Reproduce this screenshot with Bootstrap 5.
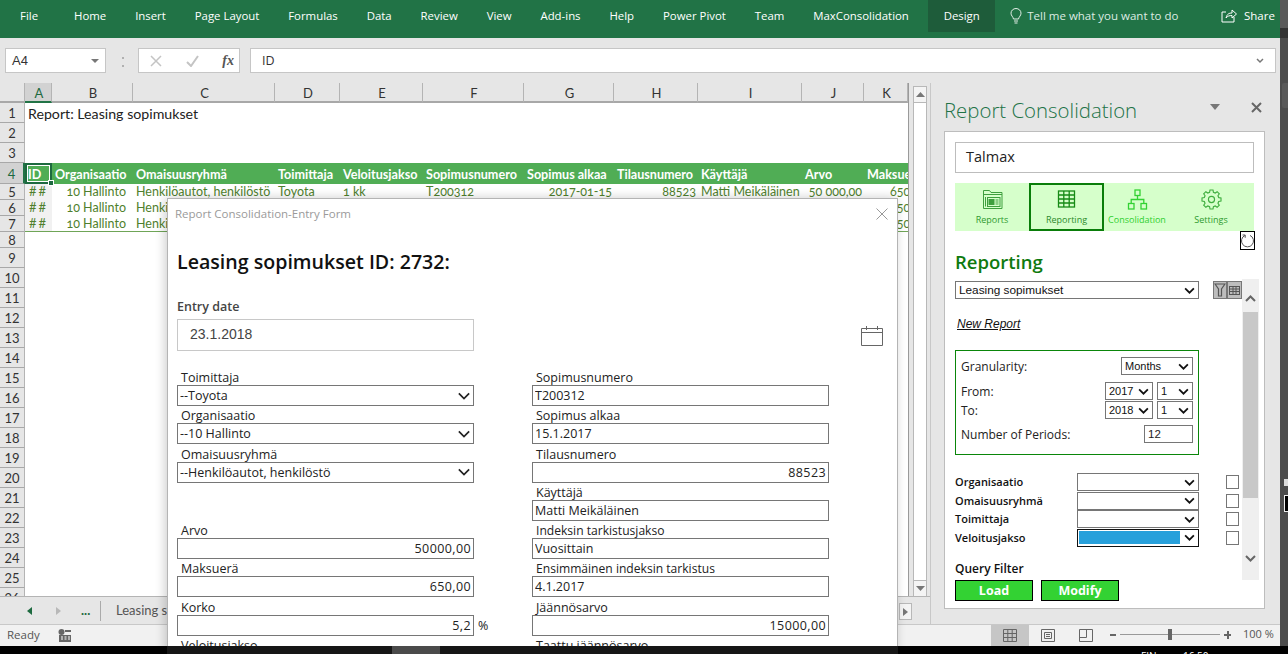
<!DOCTYPE html>
<html lang="en">
<head>
<meta charset="UTF-8" />
<title>Report Consolidation</title>
<link href="https://cdn.jsdelivr.net/npm/bootstrap@5.3.0/dist/css/bootstrap.min.css" rel="stylesheet">
<style>
  html, body { height: 654px; overflow: hidden; }
  body { font-family: "Open Sans", sans-serif; font-size: 12px; color: #222; background: #4c4c4c; position: relative; }
  .xl-page { width: 1288px; height: 646px; }
  .xl-window { width: 1280px; height: 646px; background: #e6e6e6; }
  .xl-strip { width: 8px; background: #4c4c4c; position: relative; }
  .xl-strip i { position: absolute; display: block; }
  .strip-a { left: 0; top: 0; width: 8px; height: 28px; background: #5a5a5a; }
  .strip-b { left: 0; top: 28px; width: 8px; height: 10px; background: #333; }
  .strip-c { left: 2px; top: 83px; width: 6px; height: 25px; background: #595959; border-radius: 2px 0 0 2px; }
  .strip-d { left: 4px; top: 479px; width: 4px; height: 7px; background: #ddd; }
  .strip-e { left: 4px; top: 495px; width: 4px; height: 17px; background: #000; border: 1px solid #eee; border-right: 0; }

  .xl-ribbon { height: 38px; background: #217346; color: #fff; font-size: 11.4px; padding-left: 20px; flex: none; }
  .xl-ribbon span { margin-right: 28.9px; line-height: 32px; white-space: nowrap; }
  .xl-ribbon .tab-file { margin-right: 36px; }
  .xl-ribbon .tab-design { background: #1e5c3a; height: 32px; width: 67px; text-align: center; margin: 0 15px 0 -9.500px; flex: none; }
  .xl-ribbon .tab-tell { color: #dcebe2; margin: 0 0 0 5px; font-size: 11.5px; }
  .xl-ribbon .tab-share { position: absolute; left: 1244px; margin: 0; font-size: 11.5px; }
  .xl-share-ico { left: 1221px; top: 9px; }

  .xl-formula { height: 45px; padding: 10px 4px 10px 5px; flex: none; }
  .xl-namebox { width: 101px; height: 25px; background: #fff; border: 1px solid #c6c6c6; padding: 1px 6px 0; font-family: "Liberation Sans", sans-serif; font-size: 13px; color: #333; }
  .xl-fx { width: 102px; height: 25px; margin: 0 10px 0 32px; padding: 0 5px 0 11px; background: #fff; border: 1px solid #c6c6c6; color: #bbb; }
  .xl-fx i { font-family: "Liberation Serif", serif; font-size: 14px; font-weight: 700; color: #555; }
  .xl-fxinput { height: 25px; background: #fff; border: 1px solid #c6c6c6; padding: 1px 11px 0; font-size: 12.5px; color: #333; }
  .xl-dots { position: absolute; left: 122px; top: 57px; width: 2px; height: 10px; border-top: 2px dotted #b0b0b0; border-bottom: 2px dotted #b0b0b0; }

  .xl-main { height: 541px; flex: none; }
  .xl-left { width: 931px; border-right: 1px solid #c8c8c8; flex: none; }
  .xl-grid-row { height: 513px; }

  .xl-sheet { width: 909px; height: 513px; overflow: hidden; background: #fff; border-right: 1px solid #9a9a9a; display: grid;
    grid-template-columns: 25px 27px 81px 142px 65px 83px 101px 90px 84px 104px 62px 44px;
    grid-template-rows: 20px 20px 20px 20px 21px 16px 16px 16px 16px; grid-auto-rows: 20px;
    font-family: Lato, sans-serif; font-size: 13px; color: #222; align-content: start; }
  .xl-sheet > div { white-space: nowrap; overflow: hidden; min-width: 0; }
  .col-h { background: #e6e6e6; border-right: 1px solid #b4b4b4; border-bottom: 2px solid #a8a8a8; text-align: center; line-height: 20px; padding-left: 2px; color: #333; }
  .col-on { background: #d2d2d2; border-bottom-color: #217346; color: #1d6a3f; }
  .col-corner { background: #e6e6e6; border-right: 1px solid #b4b4b4; border-bottom: 2px solid #a8a8a8; }
  .row-h { background: #e6e6e6; border-right: 1px solid #b4b4b4; border-bottom: 1px solid #a8a8a8; text-align: center; color: #333; line-height: 21px; }
  .row-on { background: #d2d2d2; border-right: 2px solid #217346; color: #1d6a3f; line-height: 23px; }
  .row-tight { line-height: 16px; }
  .x-title { grid-column: 2 / -1; padding-left: 3px; line-height: 22px; font-size: 14.2px; overflow: visible !important; }
  .x-blank { grid-column: 2 / -1; }
  .x-hd { background: #50ad55; color: #fff; font-weight: 700; font-size: 12.6px; padding-left: 3px; line-height: 23px; }
  .x-sel { border: 2px solid #1d6a3f; box-shadow: inset 0 0 0 1px #fff; line-height: 19px; padding-left: 1px; overflow: visible !important; position: relative; }
  .x-sel::after { content: ""; position: absolute; right: -4px; bottom: -4px; width: 6px; height: 6px; background: #1d6a3f; border: 1px solid #fff; z-index: 1; }
  .x-d { color: #4f7f2d; padding-left: 3px; font-size: 12.5px; line-height: 15px; font-variant-numeric: oldstyle-nums; }
  .x-r { text-align: right; padding: 0 2px 0 0; }
  .x-pr { padding-right: 7px; }
  .x-far { padding-left: 26px; }
  .x-idc { background: #f1f1f1; text-align: center; color: #4f7f2d; letter-spacing: 2px; line-height: 15px; font-size: 13px; }
  .x-last { border-bottom: 1px solid #6fa557; }
  .x-rest { grid-column: 2 / -1; }

  .xl-vscroll { width: 14px; margin-left: 4px; height: 511px; background: #fff; border: 1px solid #b8b8b8; border-top: 0; border-bottom: 0; margin-top: 3px; }
  .xl-sbtn { height: 17px; border: 1px solid #b8b8b8; margin: 0 -1px; background: #f4f4f4; color: #666; }

  .xl-tabs { height: 28px; border-top: 1px solid #b4b4b4; background: #e6e6e6; position: relative; font-size: 13px; color: #555; font-family: Lato, sans-serif; }
  .xl-tabs span { position: absolute; line-height: 27px; }
  .xl-tab-prev { left: 27px; top: 10px; }
  .xl-tab-next { left: 56px; top: 10px; }
  .xl-tabs .xl-tab-more { left: 81px; color: #1d6a3f; font-weight: 700; }
  .xl-tab-div { position: absolute; left: 100px; top: 4px; height: 20px; border-left: 1px solid #aaa; }
  .xl-tabs .xl-tab-name { left: 116px; }
  .xl-hbtn { position: absolute; left: 899px; top: 6px; width: 13px; height: 17px; border: 1px solid #b8b8b8; background: #f4f4f4; }

  .xl-pane { width: 349px; padding: 0 15px 15px 13px; position: relative; }
  .xl-pane-title { height: 48px; font-size: 20.4px; font-weight: 300; color: #217346; line-height: 54px; white-space: nowrap; }
  .xl-pane-menu { left: 279px; top: 21px; }
  .xl-pane-close { left: 320px; top: 19px; }
  .xl-panebox { height: 478px; background: #fff; border: 1px solid #bdbdbd; padding: 10px 10px 0; position: relative; }
  .xl-talmax { height: 31px; border: 1px solid #bdbdbd; padding: 0 10px; font-size: 14.5px; line-height: 28px; color: #222; }
  .xl-navbar { height: 48px; margin-top: 10px; background: #d6ffcb; }
  .xl-navitem { width: 75px; text-align: center; font-size: 9px; line-height: 12px; color: #2f9a2f; padding-top: 6px; flex: none; }
  .xl-navitem.nav-reports { width: 74px; }
  .xl-navitem.nav-consol { width: 66px; }
  .xl-navitem.nav-settings { width: 82px; }
  .xl-navitem svg { display: block; margin: 0 auto 4px; }
  .xl-navitem.on { border: 2px solid #0a7d0a; padding-top: 4px; color: #2b8a2b; }
  .xl-navitem.lime { color: #2fcf2f; }
  .xl-refresh { position: absolute; right: 9px; top: 99px; width: 15px; height: 19px; border: 1px solid #000; }
  .xl-h-report { font-size: 18.5px; font-weight: 600; color: #0f7a0f; margin: 20px 0 0; line-height: 22px; height: 30px; }
  .xsel.form-select { height: 18px; min-height: 0; padding: 0 16px 0 3px; border: 1px solid #767676; border-radius: 0; font-family: "Liberation Sans", sans-serif; font-size: 11px; line-height: 15px; color: #111; background-image: url("data:image/svg+xml,%3csvg xmlns='http://www.w3.org/2000/svg' viewBox='0 0 12 8'%3e%3cpath fill='none' stroke='%23111' stroke-width='2' d='M1 1.500L6 6.500L11 1.500'/%3e%3c/svg%3e"); background-position: right 3px center; background-size: 11px 7px; box-shadow: none; }
  .xl-report.form-select { width: 244px; font-size: 11.8px; }
  .xl-toolbtn { width: 15px; height: 18px; background: #bdbdbd; border: 1px solid #777; }
  .xl-toolbtn-first { margin-left: 14px; width: 14px; }
  .xl-newreport { font-family: "Liberation Sans", sans-serif; font-style: italic; text-decoration: underline; font-size: 12px; color: #111; margin: 17px 0 0 2px; line-height: 16px; height: 16px; }
  .xl-track { position: absolute; left: 297px; top: 147px; width: 17px; height: 301px; background: #efefef; }
  .xl-thumb { position: absolute; left: 1px; top: 33px; width: 15px; height: 186px; background: #c8c8c8; }
  .xl-chev { position: absolute; left: 3px; }
  .xl-chev-up { top: 16px; }
  .xl-chev-down { top: 276px; }
  .xl-settings { width: 244px; height: 105px; margin-top: 18px; border: 1px solid #0a860a; padding: 6px 5px; position: relative; font-size: 12px; color: #222; }
  .xl-settings .line { height: 18px; line-height: 17px; }
  .xl-gran-line { margin-bottom: 7px; }
  .xl-to-line { margin-top: 1px; }
  .xl-num-line { margin-top: 6px; }
  .w-gran.form-select { width: 72px; }
  .w-year.form-select { width: 48px; }
  .w-mon.form-select { width: 36px; }
  .xl-num { width: 49px; height: 18px; border: 1px solid #767676; font-family: "Liberation Sans", sans-serif; font-size: 11.5px; line-height: 16px; padding-left: 3px; }
  .xl-filters { margin-top: 18px; }
  .xl-filter { height: 18.5px; width: 284px; font-size: 11px; font-weight: 600; color: #111; }
  .xl-filter .name { width: 122px; flex: none; }
  .xl-filter .form-select { width: 122px; flex: none; }
  .xl-check { width: 13px; height: 14px; border: 1px solid #767676; margin-left: 27px; flex: none; }
  .xsel.is-on { border-color: #111; }
  .xl-bluefill { position: absolute; left: 2px; top: 2px; width: 101px; height: 13px; background: #27a0db; }
  .xl-qf { font-size: 12px; font-weight: 600; margin-top: 14px; line-height: 16px; color: #111; }
  .xl-go { width: 78px; height: 21px; background: #33d233; border: 1px solid #000; color: #fff; font-weight: 700; font-size: 12.5px; text-align: center; line-height: 20px; padding: 0; border-radius: 0; margin: 3px 8px 0 0; }

  .xl-status { height: 22px; background: #f1f1f1; position: relative; font-size: 11.5px; color: #555; flex: none; border-top: 1px solid #c8c8c8; }
  .xl-status > * { position: absolute; }
  .xl-viewon { left: 991px; top: 0; width: 38px; height: 21px; background: #c6c6c6; }
  .st-ready { left: 7px; top: 1px; }
  .st-macro { left: 58px; top: 4px; }
  .st-v1 { left: 1003px; top: 4px; }
  .st-v2 { left: 1041px; top: 4px; }
  .st-v3 { left: 1079px; top: 4px; }
  .st-minus { left: 1110px; top: 9px; width: 6px; height: 2px; background: #666; }
  .st-track { left: 1120px; top: 9px; width: 100px; height: 1px; background: #999; }
  .st-thumb { left: 1168px; top: 4px; width: 4px; height: 11px; background: #666; }
  .st-plus-h { left: 1224px; top: 9px; width: 7px; height: 2px; background: #666; }
  .st-plus-v { left: 1226.500px; top: 6px; width: 2px; height: 8px; background: #666; }
  .st-zoom { left: 1243px; top: 1px; font-size: 11px; }

  .xl-taskbar { position: absolute; left: 0; top: 646px; width: 1288px; height: 8px; background: #000; z-index: 5; overflow: hidden; }
  .xl-taskbar .dim { position: absolute; top: 0; left: 167px; width: 731px; height: 8px; background: rgba(24,24,24,.93); }
  .xl-taskbar .lit { position: absolute; top: 0; left: 392px; width: 48px; height: 8px; background: #4a4a4a; }
  .xl-taskbar .clock { position: absolute; top: 4px; color: #fff; font-size: 10px; line-height: 12px; }
  .xl-taskbar .clock-a { left: 1141px; }
  .xl-taskbar .clock-b { left: 1183px; }

  .xl-form { position: absolute; left: 167px; top: 198px; width: 731px; height: 456px; background: #fff; border: 1px solid #b4b4b4; box-shadow: -2px 0 10px rgba(0,0,0,.2); z-index: 3; overflow: hidden; padding: 0 9px; color: #222; }
  .xl-form-bar { height: 29px; font-size: 11.5px; color: #9a9a9a; margin-left: -2px; line-height: 30px; }
  .xl-form-close { left: 708px; top: 9px; }
  .xl-form h1 { font-size: 19.6px; font-weight: 600; color: #111; margin: 21px 0 0; line-height: 26px; height: 26px; }
  .xl-entry-l { font-size: 12.5px; font-weight: 600; color: #444; margin-top: 23px; line-height: 18px; height: 21px; }
  .xl-entry { width: 297px; height: 32px; border: 1px solid #c8c8c8; padding: 0 12px; font-family: "Liberation Sans", sans-serif; font-size: 14px; color: #444; line-height: 28px; }
  .xl-cal { position: absolute; left: 693px; top: 127px; }
  .xl-columns { margin-top: 18px; gap: 58px; }
  .xl-col { width: 297px; flex: none; }
  .fld { height: 38.3px; }
  .fld label { display: block; padding-left: 4px; height: 16px; font-size: 12.5px; line-height: 18px; color: #222; margin: 0; white-space: nowrap; }
  .fld label.tight { font-size: 12.1px; }
  .fld .form-control, .fld .form-select { height: 21px; min-height: 0; border: 1px solid #767676; border-radius: 0; padding: 0 2px; font-family: "Open Sans", sans-serif; font-size: 12.5px; line-height: 19px; color: #222; box-shadow: none; }
  .fld .form-select { padding-right: 20px; background-image: url("data:image/svg+xml,%3csvg xmlns='http://www.w3.org/2000/svg' viewBox='0 0 14 9'%3e%3cpath fill='none' stroke='%23222' stroke-width='2' d='M1 1.500L7 7.500L13 1.500'/%3e%3c/svg%3e"); background-position: right 3px center; background-size: 12px 8px; }
  .fld .num { text-align: right; letter-spacing: .4px; }
  .fld .pct { position: absolute; left: 301px; top: 17px; font-size: 12.5px; line-height: 19px; }
</style>
</head>
<body>
<div class="xl-page d-flex">
  <div class="xl-window d-flex flex-column">
    <div class="xl-ribbon d-flex align-items-start">
      <span class="tab-file">File</span><span>Home</span><span>Insert</span><span>Page Layout</span><span>Formulas</span><span>Data</span><span>Review</span><span>View</span><span>Add-ins</span><span>Help</span><span>Power Pivot</span><span>Team</span><span>MaxConsolidation</span>
      <span class="tab-design">Design</span>
      <svg width="12" height="17" viewBox="0 0 12 17" class="mt-2" fill="none" stroke="#e4efe8" stroke-width="1"><path d="M3.5 11C3 8.5 1 7.800 1 5.200A5 4.700 0 0 1 11 5.200C11 7.800 9 8.500 8.500 11ZM4 13H8M4.500 15H7.500"/></svg>
      <span class="tab-tell">Tell me what you want to do</span>
      <svg width="16" height="14" viewBox="0 0 16 14" class="position-absolute xl-share-ico" fill="none" stroke="#fff" stroke-width="1"><path d="M5 3H1V13H13V8M5 9C6 5 8 4 11 4V1L15.500 5L11 9V6.500C8.500 6.500 6.500 7 5 9Z"/></svg>
      <span class="tab-share">Share</span>
    </div>

    <div class="xl-formula d-flex align-items-center">
      <div class="xl-namebox d-flex align-items-center justify-content-between"><span>A4</span><svg width="8" height="4"><path d="M0 0H8L4 4Z" fill="#777"/></svg></div>
      <div class="xl-dots"></div>
      <div class="xl-fx d-flex align-items-center justify-content-between">
        <svg width="12" height="12" fill="none" stroke="#c4c4c4" stroke-width="1.500"><path d="M1 1L11 11M11 1L1 11"/></svg>
        <svg width="13" height="12" fill="none" stroke="#c4c4c4" stroke-width="2"><path d="M1 7L5 11L12 1"/></svg>
        <i>fx</i>
      </div>
      <div class="xl-fxinput flex-grow-1 d-flex align-items-center justify-content-between"><span>ID</span><svg width="8" height="6" class="me-n1" fill="none" stroke="#777" stroke-width="1.500"><path d="M1 1L4 4L7 1"/></svg></div>
    </div>

    <div class="xl-main d-flex">
      <div class="xl-left d-flex flex-column">
        <div class="xl-grid-row d-flex">
          <div class="xl-sheet" id="sheet"></div>
          <div class="xl-vscroll d-flex flex-column justify-content-between">
            <div class="xl-sbtn d-flex align-items-center justify-content-center"><svg width="9" height="5"><path d="M0 5L4.500 0L9 5Z" fill="#777"/></svg></div>
            <div class="xl-sbtn d-flex align-items-center justify-content-center"><svg width="9" height="5"><path d="M0 0L4.500 5L9 0Z" fill="#777"/></svg></div>
          </div>
        </div>
        <div class="xl-tabs">
          <svg width="5" height="8" class="position-absolute xl-tab-prev"><path d="M5 0L0 4L5 8Z" fill="#1d6a3f"/></svg>
          <svg width="5" height="8" class="position-absolute xl-tab-next"><path d="M0 0L5 4L0 8Z" fill="#b8b8b8"/></svg>
          <span class="xl-tab-more">...</span>
          <i class="xl-tab-div"></i>
          <span class="xl-tab-name">Leasing sopimukset</span>
          <div class="xl-hbtn d-flex align-items-center justify-content-center"><svg width="5" height="8"><path d="M0 0L5 4L0 8Z" fill="#777"/></svg></div>
        </div>
      </div>

      <div class="xl-pane flex-grow-1">
        <div class="xl-pane-title">Report Consolidation</div>
        <svg width="10" height="6" class="position-absolute xl-pane-menu"><path d="M0 0H10L5 6Z" fill="#777"/></svg>
        <svg width="11" height="11" class="position-absolute xl-pane-close" fill="none" stroke="#666" stroke-width="2"><path d="M1 1L10 10M10 1L1 10"/></svg>

        <div class="xl-panebox">
          <div class="xl-talmax">Talmax</div>
          <div class="xl-navbar d-flex">
            <div class="xl-navitem nav-reports">
              <svg width="21" height="21" viewBox="0 0 21 21" fill="none" stroke="#3f9f3f" stroke-width="1"><path d="M1.500 19.500V1.500H7.500L9 3.500H20V19.500ZM1.500 5.500H20M3.500 8V17.500"/><rect x="5.500" y="8.500" width="12.500" height="9"/><rect x="7" y="10.500" width="5" height="5" fill="#3f9f3f"/><path d="M13.500 11H16.500M13.500 13H16.500M13.500 15H16.500"/></svg>
              Reports
            </div>
            <div class="xl-navitem on">
              <svg width="21" height="21" viewBox="0 0 21 21" fill="none" stroke="#168a16" stroke-width="1.300"><rect x="2.500" y="2" width="16" height="16"/><path d="M2.500 6H18.500M2.500 10H18.500M2.500 14H18.500M7.800 2V18M13.200 2V18"/></svg>
              Reporting
            </div>
            <div class="xl-navitem lime nav-consol">
              <svg width="21" height="21" viewBox="0 0 21 21" fill="none" stroke="#33d233" stroke-width="1.300"><rect x="8" y="1" width="5" height="5.500"/><rect x="1.500" y="14.500" width="5.500" height="5.500"/><rect x="14" y="14.500" width="5.500" height="5.500"/><path d="M10.500 6.500V10.500M4.200 14.500V10.500H16.800V14.500"/></svg>
              Consolidation
            </div>
            <div class="xl-navitem nav-settings">
              <svg width="21" height="21" viewBox="0 0 24 24" fill="none" stroke="#3fae3f" stroke-width="1.300"><g transform="translate(12 12)"><polygon points="8.210,-2.200 10.860,-1.720 10.860,1.720 8.210,2.200 7.360,4.250 8.900,6.460 6.460,8.900 4.250,7.360 2.200,8.210 1.720,10.860 -1.720,10.860 -2.200,8.210 -4.250,7.360 -6.460,8.900 -8.900,6.460 -7.360,4.250 -8.210,2.200 -10.860,1.720 -10.860,-1.720 -8.210,-2.200 -7.360,-4.250 -8.900,-6.460 -6.460,-8.900 -4.250,-7.360 -2.200,-8.210 -1.720,-10.860 1.720,-10.860 2.200,-8.210 4.250,-7.360 6.460,-8.900 8.900,-6.460 7.360,-4.250"/><circle r="3.500"/></g></svg>
              Settings
            </div>
          </div>
          <div class="xl-refresh d-flex align-items-center justify-content-center"><svg width="13" height="14" viewBox="0 0 13 14" class="flex-shrink-0" fill="none" stroke="#555"><path d="M4 1.400A6 6 0 1 0 9 1.400"/><path d="M1.500 1H4.200V3.800"/></svg></div>

          <h2 class="xl-h-report">Reporting</h2>
          <div class="d-flex">
            <select class="form-select xsel xl-report"><option>Leasing sopimukset</option></select>
            <div class="xl-toolbtn xl-toolbtn-first d-flex align-items-center justify-content-center"><svg width="12" height="14" fill="none" stroke="#555" stroke-width="1.200"><path d="M1 1H11L7.500 6V13H4.500V6Z"/></svg></div>
            <div class="xl-toolbtn d-flex align-items-center justify-content-center"><svg width="11" height="9" fill="none" stroke="#555"><rect x=".5" y=".5" width="10" height="8"/><path d="M0 3H11M0 5.500H11M4 0V9M7 0V9"/></svg></div>
          </div>
          <div class="xl-newreport">New Report</div>
          <div class="xl-track">
            <svg class="xl-chev xl-chev-up" width="11" height="7" fill="none" stroke="#666" stroke-width="2"><path d="M1 6L5.500 1.500L10 6"/></svg>
            <div class="xl-thumb"></div>
            <svg class="xl-chev xl-chev-down" width="11" height="7" fill="none" stroke="#666" stroke-width="2"><path d="M1 1L5.500 5.500L10 1"/></svg>
          </div>

          <div class="xl-settings">
            <div class="line d-flex justify-content-between align-items-center xl-gran-line"><span>Granularity:</span><select class="form-select xsel w-gran"><option>Months</option></select></div>
            <div class="line d-flex align-items-center"><span class="me-auto">From:</span><select class="form-select xsel w-year me-1"><option>2017</option></select><select class="form-select xsel w-mon"><option>1</option></select></div>
            <div class="line d-flex align-items-center xl-to-line"><span class="me-auto">To:</span><select class="form-select xsel w-year me-1"><option>2018</option></select><select class="form-select xsel w-mon"><option>1</option></select></div>
            <div class="line d-flex justify-content-between align-items-center xl-num-line"><span>Number of Periods:</span><div class="xl-num">12</div></div>
          </div>

          <div class="xl-filters">
            <div class="xl-filter d-flex align-items-center"><span class="name">Organisaatio</span><select class="form-select xsel"></select><i class="xl-check"></i></div>
            <div class="xl-filter d-flex align-items-center"><span class="name">Omaisuusryhmä</span><select class="form-select xsel"></select><i class="xl-check"></i></div>
            <div class="xl-filter d-flex align-items-center"><span class="name">Toimittaja</span><select class="form-select xsel"></select><i class="xl-check"></i></div>
            <div class="xl-filter d-flex align-items-center"><span class="name">Veloitusjakso</span><span class="position-relative"><select class="form-select xsel is-on"></select><i class="xl-bluefill"></i></span><i class="xl-check"></i></div>
          </div>
          <div class="xl-qf">Query Filter</div>
          <div class="d-flex">
            <button class="btn xl-go">Load</button>
            <button class="btn xl-go">Modify</button>
          </div>
        </div>
      </div>
    </div>

    <div class="xl-status">
      <span class="st-ready">Ready</span>
      <svg width="14" height="13" class="st-macro" fill="#666"><circle cx="3.500" cy="3" r="3"/><path d="M7 1H13V3H7ZM1 6H13V13H1Z"/><path d="M3 8H5M6.500 8H8.500M10 8H12M3 10H5M6.500 10H8.500M10 10H12" stroke="#fff"/></svg>
      <div class="xl-viewon"></div>
      <svg width="14" height="13" class="st-v1" fill="none" stroke="#666"><path d="M.5 .5H13.500V12.500H.5ZM.5 4.500H13.500M.5 8.500H13.500M4.800 0V13M9.200 0V13"/></svg>
      <svg width="14" height="13" class="st-v2" fill="none" stroke="#666"><path d="M.5 .5H13.500V12.500H.5ZM3.500 3.500H10.500V9.500H3.500ZM5 5.500H9M5 7.500H9"/></svg>
      <svg width="14" height="13" class="st-v3" fill="none" stroke="#666"><path d="M.5 .5H13.500V12.500H.5ZM.5 8.500H7.500V.5"/></svg>
      <i class="st-minus"></i>
      <i class="st-track"></i>
      <i class="st-thumb"></i>
      <i class="st-plus-h"></i>
      <i class="st-plus-v"></i>
      <span class="st-zoom">100 %</span>
    </div>
  </div>
  <div class="xl-strip">
    <i class="strip-a"></i>
    <i class="strip-b"></i>
    <i class="strip-c"></i>
    <i class="strip-d"></i>
    <i class="strip-e"></i>
  </div>
</div>

<!-- Entry form floats over the sheet -->
<div class="xl-form">
  <div class="xl-form-bar">Report Consolidation-Entry Form</div>
  <svg width="12" height="12" class="position-absolute xl-form-close" fill="none" stroke="#999"><path d="M.5 .5L11.500 11.500M11.500 .5L.5 11.500"/></svg>
  <h1>Leasing sopimukset ID: 2732:</h1>
  <div class="xl-entry-l">Entry date</div>
  <div class="xl-entry">23.1.2018</div>
  <svg class="xl-cal" width="22" height="20" fill="none" stroke="#666"><path d="M.5 2.500H21.500V19.500H.5ZM.5 6.500H21.500M5.500 0V4M16.500 0V4"/></svg>
  <div class="xl-columns d-flex">
    <div class="xl-col" id="leftCol"></div>
    <div class="xl-col" id="rightCol"></div>
  </div>
</div>

<div class="xl-taskbar">
  <div class="dim"></div>
  <div class="lit"></div>
  <span class="clock clock-a">FIN</span>
  <span class="clock clock-b">16.50</span>
</div>

<script>
  // Column header and rows of the worksheet
  const sheet = document.getElementById('sheet');
  const letters = ['A','B','C','D','E','F','G','H','I','J','K'];
  const heads = ['Organisaatio','Omaisuusryhmä','Toimittaja','Veloitusjakso','Sopimusnumero','Sopimus alkaa','Tilausnumero','Käyttäjä','Arvo','Maksuerä'];
  let html = '<div class="col-corner"></div>' + letters.map((l, i) => `<div class="col-h${i === 0 ? ' col-on' : ''}">${l}</div>`).join('');
  html += '<div class="row-h">1</div><div class="x-title">Report: Leasing sopimukset</div>';
  html += '<div class="row-h">2</div><div class="x-blank"></div><div class="row-h">3</div><div class="x-blank"></div>';
  html += '<div class="row-h row-on">4</div><div class="x-hd x-sel">ID</div>' + heads.map(h => `<div class="x-hd">${h}</div>`).join('');
  [5, 6, 7].forEach(n => {
    const last = n === 7 ? ' x-last' : '';
    html += `<div class="row-h row-tight">${n}</div><div class="x-idc${last}">##</div>`;
    const cells = [['10 Hallinto', 'x-r x-pr'], ['Henkilöautot, henkilöstö', ''], ['Toyota', ''], ['1 kk', ''], ['T200312', ''], ['2017-01-15', 'x-r'], ['88523', 'x-r'], ['Matti Meikäläinen', ''], ['50 000,00', 'x-r'], ['650,00', 'x-far']];
    html += cells.map(c => `<div class="x-d ${c[1]}${last}">${c[0]}</div>`).join('');
  });
  for (let n = 8; n <= 26; n++) {
    html += `<div class="row-h${n === 8 ? ' row-tight' : ''}">${n}</div><div class="x-rest"></div>`;
  }
  sheet.innerHTML = html;

  // Entry form fields, two columns
  const field = (name, value, kind) => {
    if (!name) return '<div class="fld"></div>';
    let ctl = `<input class="form-control" value="${value}">`;
    if (kind === 'sel') ctl = `<select class="form-select"><option>${value}</option></select>`;
    if (kind === 'num' || kind === 'pct') ctl = `<input class="form-control num" value="${value}">`;
    const tight = name.length > 20 ? ' class="tight"' : '';
    return `<div class="fld position-relative"><label${tight}>${name}</label>${ctl}${kind === 'pct' ? '<span class="pct">%</span>' : ''}</div>`;
  };
  document.getElementById('leftCol').innerHTML = [
    ['Toimittaja', '--Toyota', 'sel'], ['Organisaatio', '--10 Hallinto', 'sel'], ['Omaisuusryhmä', '--Henkilöautot, henkilöstö', 'sel'], [],
    ['Arvo', '50000,00', 'num'], ['Maksuerä', '650,00', 'num'], ['Korko', '5,2', 'pct'], ['Veloitusjakso', '1 kk', 'sel']
  ].map(f => field(...f)).join('');
  document.getElementById('rightCol').innerHTML = [
    ['Sopimusnumero', 'T200312'], ['Sopimus alkaa', '15.1.2017'], ['Tilausnumero', '88523', 'num'], ['Käyttäjä', 'Matti Meikäläinen'],
    ['Indeksin tarkistusjakso', 'Vuosittain'], ['Ensimmäinen indeksin tarkistus', '4.1.2017'], ['Jäännösarvo', '15000,00', 'num'], ['Taattu jäännösarvo', '0,00', 'num']
  ].map(f => field(...f)).join('');
</script>
</body>
</html>
